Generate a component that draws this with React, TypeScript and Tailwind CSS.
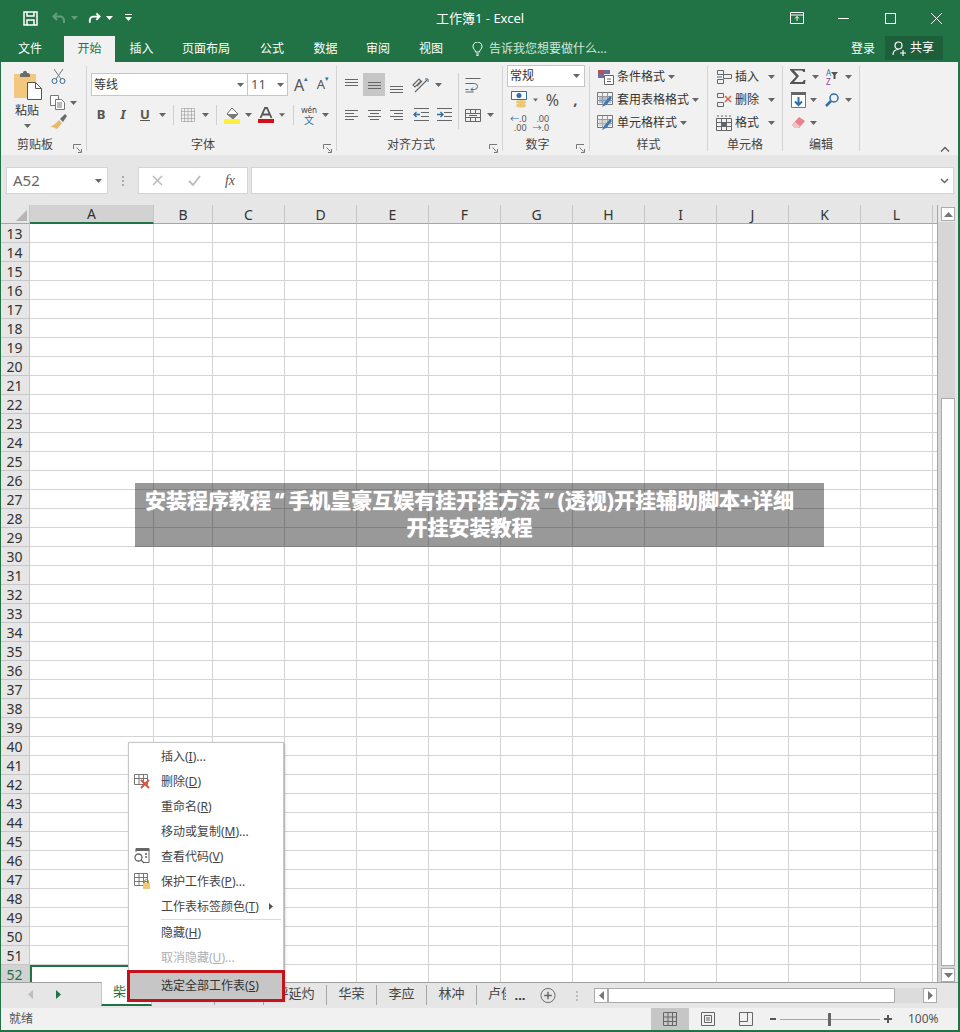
import type { ReactNode } from "react";

const colWidths = [
  "w-[124px]",
  "w-[59px]",
  "w-[72px]",
  "w-[72px]",
  "w-[72px]",
  "w-[72px]",
  "w-[72px]",
  "w-[72px]",
  "w-[72px]",
  "w-[72px]",
  "w-[72px]",
  "w-[72px]",
];
const colNames = ["A", "B", "C", "D", "E", "F", "G", "H", "I", "J", "K", "L"];
const rows = Array.from({ length: 40 }, (_, i) => i + 13);

function Caret({ color = "#666" }: { color?: string }) {
  return (
    <svg width="7" height="4" viewBox="0 0 7 4">
      <path d="M0 0h7L3.5 4z" fill={color} />
    </svg>
  );
}

function Slot({ w, children, className }: { w: string; children?: ReactNode; className?: string }) {
  return <div className={`flex shrink-0 items-center justify-center ${w} ${className ?? ""}`}>{children}</div>;
}

function Launcher() {
  return (
    <svg width="9" height="9" viewBox="0 0 9 9" fill="none" stroke="#777">
      <path d="M.5 5V.5H8M.5 .5" />
      <path d="M3.5 3.5l4 4M8.5 5v3.5H5" />
    </svg>
  );
}

function Group({
  w,
  label,
  launcher,
  children,
}: {
  w: string;
  label: string;
  launcher?: boolean;
  children: ReactNode;
}) {
  return (
    <>
      <div className={`flex h-full shrink-0 flex-col ${w}`}>
        <div className="h-[73px]">{children}</div>
        <div className="flex h-[20px] items-center text-[#444]">
          <div className="flex-1 text-center">{label}</div>
          {launcher && (
            <Slot w="w-[17px]" className="pt-[6px]">
              <Launcher />
            </Slot>
          )}
        </div>
      </div>
      <div className="my-[4px] w-px shrink-0 bg-[#d4d4d4]" />
    </>
  );
}

function Sep({ h = "h-[20px]" }: { h?: string }) {
  return <div className={`w-px bg-[#d0d0d0] ${h}`} />;
}

function AlignLines({ kind, y }: { kind: "l" | "c" | "r" | "j"; y: number }) {
  const rows2 =
    kind === "j"
      ? [
          [1, 14],
          [1, 14],
          [1, 14],
        ]
      : kind === "l"
        ? [
            [1, 14],
            [1, 10],
            [1, 14],
            [1, 10],
          ]
        : kind === "c"
          ? [
              [1, 14],
              [3, 12],
              [1, 14],
              [3, 12],
            ]
          : [
              [1, 14],
              [5, 14],
              [1, 14],
              [5, 14],
            ];
  return (
    <svg width="15" height="16" viewBox="0 0 15 16" stroke="#666">
      {rows2.map((r, i) => (
        <path key={i} d={`M${r[0]} ${y + i * 3 + 0.5}H${r[1]}`} />
      ))}
    </svg>
  );
}

function IndentIcon({ dir }: { dir: "in" | "out" }) {
  return (
    <svg width="17" height="14" viewBox="0 0 17 14" fill="none">
      <path d="M1 .5h15M8 4.500h8M8 8.500h8M1 12.500h15" stroke="#666" />
      {dir === "out" ? (
        <path d="M7 6.500H1M3.500 4L1 6.500 3.500 9" stroke="#2f6ea6" strokeWidth="1.400" />
      ) : (
        <path d="M1 6.500h6M4.500 4L7 6.500 4.500 9" stroke="#2f6ea6" strokeWidth="1.400" />
      )}
    </svg>
  );
}

function TableBrush({ tone }: { tone: string }) {
  return (
    <svg width="17" height="17" viewBox="0 0 17 17" fill="none">
      <path d="M.5 1.500h15v12H.5z" stroke="#777" />
      <path d="M.5 5.500h15M.5 9.500h15M5.500 1.500v12M10.500 1.500v12" stroke="#999" />
      <path d="M2 6h12v6H2z" fill={tone} opacity=".55" />
      <path d="M5 16l2-4 6-7 2 2-6 7z" fill="#3d78b0" />
    </svg>
  );
}

function StyleRow({ icon, label }: { icon: ReactNode; label: string }) {
  return (
    <div className="flex h-[23px] items-center pl-[7px] text-[#333]">
      <Slot w="w-[17px]">{icon}</Slot>
      <span className="ml-[3px]">{label}</span>
      <span className="ml-[3px] flex">
        <Caret />
      </span>
    </div>
  );
}

function CellRow({ icon, label }: { icon: ReactNode; label: string }) {
  return (
    <div className="flex h-[23px] items-center pl-[7px] text-[#333]">
      <Slot w="w-[17px]">{icon}</Slot>
      <span className="ml-[3px] w-[33px]">{label}</span>
      <Slot w="w-[7px]">
        <Caret />
      </Slot>
    </div>
  );
}

function GridIcon({ extra }: { extra?: ReactNode }) {
  return (
    <svg width="16" height="16" viewBox="0 0 16 16" fill="none" stroke="#666">
      <path d="M1.500 1.500h6v4h-6zM1.500 10.500h6v4h-6z" />
      {extra}
    </svg>
  );
}

function TitleBar() {
  return (
    <div className="flex h-[36px] shrink-0 items-center bg-[#217346] text-white">
      <Slot w="w-[52px]" className="pl-[8px]">
        <svg width="15" height="15" viewBox="0 0 15 15" fill="none" stroke="#fff" strokeWidth="1.500">
          <path d="M1 1h13v13H1z" />
          <path d="M4 1v4h7V1M4 14V9h7v5" />
        </svg>
      </Slot>
      <Slot w="w-[14px]" className="opacity-30">
        <svg width="14" height="12" viewBox="0 0 14 12" fill="none" stroke="#fff" strokeWidth="2">
          <path d="M5 1L1.500 4.500 5 8M2 4.500h6a4 4 0 0 1 4 4V11" />
        </svg>
      </Slot>
      <Slot w="w-[16px]" className="opacity-30">
        <Caret color="#fff" />
      </Slot>
      <Slot w="w-[14px]" className="ml-[5px]">
        <svg width="15" height="12" viewBox="0 0 15 12" fill="none" stroke="#fff" strokeWidth="2">
          <path d="M10 1l3.500 3.500L10 8M13 4.500H7a4 4 0 0 0-4 4V11" />
        </svg>
      </Slot>
      <Slot w="w-[16px]">
        <Caret color="#fff" />
      </Slot>
      <Slot w="w-[22px]">
        <svg width="7" height="8" viewBox="0 0 7 8">
          <path d="M0 0h7v1H0zM0 3h7L3.500 7z" fill="#fff" />
        </svg>
      </Slot>
      <div className="ml-[297px] w-[100px] whitespace-nowrap pt-[2px] text-[13px]">工作簿1 - Excel</div>
      <Slot w="w-[16px]" className="ml-[253px]">
        <svg width="14" height="12" viewBox="0 0 14 12" fill="none" stroke="#fff">
          <path d="M.5 .5h13v11H.5zM.5 3h13" />
          <path d="M7 9V4.500M5 6.500l2-2 2 2" />
        </svg>
      </Slot>
      <Slot w="w-[12px]" className="ml-[32px]">
        <div className="h-px w-[11px] bg-white" />
      </Slot>
      <Slot w="w-[12px]" className="ml-[35px]">
        <div className="h-[11px] w-[11px] border border-white" />
      </Slot>
      <Slot w="w-[13px]" className="ml-[34px]">
        <svg width="13" height="13" viewBox="0 0 13 13" stroke="#fff">
          <path d="M1 1l11 11M12 1L1 12" />
        </svg>
      </Slot>
    </div>
  );
}

function TabRow() {
  const tabs: [string, string][] = [
    ["插入", "w-[53px]"],
    ["页面布局", "w-[76px]"],
    ["公式", "w-[56px]"],
    ["数据", "w-[51px]"],
    ["审阅", "w-[54px]"],
    ["视图", "w-[52px]"],
  ];
  return (
    <div className="flex h-[26px] shrink-0 items-center bg-[#217346] text-white">
      <Slot w="w-[64px]" className="h-full pr-[4px]">
        文件
      </Slot>
      <Slot w="w-[51px]" className="h-full bg-[#f1f1f1] text-[#217346]">
        开始
      </Slot>
      {tabs.map(([t, w]) => (
        <Slot key={t} w={w} className="h-full">
          {t}
        </Slot>
      ))}
      <Slot w="w-[13px]" className="ml-[14px]">
        <svg width="11" height="14" viewBox="0 0 11 14" fill="none" stroke="#fff">
          <path d="M3.500 10c0-2-2.500-3-2.500-5.500a4.500 4.500 0 0 1 9 0C10 7 7.500 8 7.500 10zM4 12h3M4.500 13.500h2" />
        </svg>
      </Slot>
      <div className="ml-[5px] w-[362px] whitespace-nowrap text-[#d5e6dc]">告诉我您想要做什么...</div>
      <div className="w-[25px] whitespace-nowrap">登录</div>
      <div className="ml-[9px] flex h-[24px] w-[58px] items-center self-start bg-[#1c5f3a] pl-[7px]">
        <svg width="15" height="15" viewBox="0 0 15 15" fill="none" stroke="#fff" strokeWidth="1.200">
          <circle cx="6.500" cy="4.500" r="3.500" />
          <path d="M1 14c0-4 2-5.500 5.500-5.500M8 12h6M11 9v6" />
        </svg>
        <span className="ml-[3px]">共享</span>
      </div>
    </div>
  );
}

function Ribbon() {
  return (
    <div className="flex h-[93px] shrink-0 bg-[#f1f1f1] pl-[1px]">
      <Group w="w-[85px]" label="剪贴板" launcher>
        <div className="flex">
          <div className="flex w-[49px] flex-col items-center pl-[3px] pt-[8px]">
            <svg width="29" height="30" viewBox="0 0 29 30">
              <path d="M1 4h22v24H1z" fill="#f3c77d" />
              <path d="M7 5c0-2 2-2 3-2 0-3 4-3 4 0 1 0 3 0 3 2v2H7z" fill="#6b6b6b" />
              <path d="M14.500 12.500h8l6 6v11h-14z" fill="#fff" stroke="#555" />
              <path d="M22.500 12.500v6h6" fill="none" stroke="#555" />
            </svg>
            <div className="mt-[2px] text-[#333]">粘贴</div>
            <div className="mt-[4px] flex">
              <Caret />
            </div>
          </div>
          <div className="flex flex-col pt-[6px]">
            <div className="h-[24px] pl-[1px]">
              <svg width="15" height="16" viewBox="0 0 15 16" fill="none" stroke="#35688f">
                <path d="M3 1l7 10M12 1L5 11" stroke="#777" />
                <circle cx="3.500" cy="13" r="2.500" />
                <circle cx="11.500" cy="13" r="2.500" />
              </svg>
            </div>
            <div className="flex h-[21px] items-center">
              <svg width="15" height="15" viewBox="0 0 15 15" fill="#fff" stroke="#777">
                <path d="M.5 .5h8v10h-8z" />
                <path d="M5.500 4.500h6l3 3v7h-9z" />
                <path d="M7 8h5M7 10h5M7 12h5" />
              </svg>
              <span className="ml-[5px] flex">
                <Caret />
              </span>
            </div>
            <div className="mt-[1px] h-[20px]">
              <svg width="17" height="16" viewBox="0 0 17 16">
                <path d="M9 6l3 3-5 6-7-3c3 0 5-2 9-6z" fill="#e8b96a" />
                <path d="M10 5l5-5 2 2-4 6z" fill="#6b6b6b" />
              </svg>
            </div>
          </div>
        </div>
      </Group>

      <Group w="w-[249px]" label="字体" launcher>
        <div className="flex h-[34px] items-end pl-[4px]">
          <div className="flex h-[23px] w-[157px] items-center border border-[#c6c6c6] bg-white pl-[2px] text-[#333]">
            <span className="flex-1">等线</span>
            <span className="mr-[3px] flex">
              <Caret />
            </span>
          </div>
          <div className="flex h-[23px] w-[40px] items-center border border-l-0 border-[#c6c6c6] bg-white pl-[3px] text-[13px] text-[#555]">
            <span className="flex-1">11</span>
            <span className="mr-[3px] flex">
              <Caret />
            </span>
          </div>
          <Slot w="w-[22px]" className="ml-[2px] h-[23px] text-[16px] text-[#555]">
            A<span className="-mt-[10px] text-[7px] text-[#2f6ea6]">▴</span>
          </Slot>
          <Slot w="w-[22px]" className="h-[23px] text-[13px] text-[#555]">
            A<span className="-mt-[10px] text-[7px] text-[#2f6ea6]">▾</span>
          </Slot>
        </div>
        <div className="mt-[8px] flex h-[22px] items-center pl-[4px] text-[#555]">
          <Slot w="w-[20px]" className="text-[13px] font-bold">
            B
          </Slot>
          <Slot w="w-[24px]" className="text-[13px] font-bold italic">
            I
          </Slot>
          <Slot w="w-[20px]" className="text-[13px] font-bold underline">
            U
          </Slot>
          <Slot w="w-[14px]">
            <Caret />
          </Slot>
          <Slot w="w-[8px]">
            <Sep />
          </Slot>
          <Slot w="w-[22px]">
            <svg width="14" height="14" viewBox="0 0 14 14" fill="none" stroke="#888" strokeDasharray="1 1">
              <path d="M.5 .5h13v13H.5zM7 .5v13M.5 7h13M3.500 .5v13M10.500 .5v13M.5 3.500h13M.5 10.500h13" />
            </svg>
          </Slot>
          <Slot w="w-[12px]">
            <Caret />
          </Slot>
          <Slot w="w-[10px]">
            <Sep />
          </Slot>
          <Slot w="w-[22px]">
            <svg width="16" height="17" viewBox="0 0 16 17">
              <path d="M8 1l6 6-5 5-6-5z" fill="#fff" stroke="#666" />
              <path d="M3 7h11l-5 5z" fill="#7a7a7a" />
              <path d="M0 12h16v5H0z" fill="#ffef3a" />
            </svg>
          </Slot>
          <Slot w="w-[10px]">
            <Caret />
          </Slot>
          <Slot w="w-[26px]">
            <svg width="16" height="16" viewBox="0 0 16 16">
              <path d="M0 12h16v4H0z" fill="#d2101a" />
              <path d="M2.500 11L7 1h2l4.500 10M4.500 7.500h7" fill="none" stroke="#555" strokeWidth="1.800" />
            </svg>
          </Slot>
          <Slot w="w-[6px]">
            <Caret />
          </Slot>
          <Slot w="w-[16px]">
            <Sep />
          </Slot>
          <Slot w="w-[16px]" className="h-[22px]">
            <div className="flex flex-col items-center leading-[10px]">
              <span className="text-[8px] text-[#444]">wén</span>
              <span className="text-[10px] text-[#2f6ea6]">文</span>
            </div>
          </Slot>
          <Slot w="w-[16px]">
            <Caret />
          </Slot>
        </div>
      </Group>

      <Group w="w-[165px]" label="对齐方式" launcher>
        <div className="flex pl-[3px] pt-[11px]">
          <div className="w-[118px]">
            <div className="flex h-[23px] items-center">
              <Slot w="w-[23px]">
                <AlignLines kind="j" y={2} />
              </Slot>
              <Slot w="w-[22px]" className="h-full bg-[#c6c6c6]">
                <AlignLines kind="j" y={5} />
              </Slot>
              <Slot w="w-[23px]">
                <AlignLines kind="j" y={9} />
              </Slot>
              <Slot w="w-[24px]">
                <svg width="17" height="16" viewBox="0 0 17 16" fill="none" stroke="#666">
                  <path d="M1 8l6-6 2 2-6 6zM5 9l5-5M3 15L15 3" strokeWidth="1.100" />
                  <path d="M13 2h3v3" stroke="#2f6ea6" />
                </svg>
              </Slot>
              <Slot w="w-[12px]">
                <Caret />
              </Slot>
            </div>
            <div className="mt-[8px] flex h-[22px] items-center">
              <Slot w="w-[23px]">
                <AlignLines kind="l" y={3} />
              </Slot>
              <Slot w="w-[22px]">
                <AlignLines kind="c" y={3} />
              </Slot>
              <Slot w="w-[23px]">
                <AlignLines kind="r" y={3} />
              </Slot>
              <Slot w="w-[24px]" className="ml-[1px]">
                <IndentIcon dir="out" />
              </Slot>
              <Slot w="w-[22px]">
                <IndentIcon dir="in" />
              </Slot>
            </div>
          </div>
          <div className="h-[56px] w-px bg-[#d0d0d0]" />
          <div className="flex flex-col">
            <Slot w="w-[28px]" className="h-[23px]">
              <svg width="16" height="16" viewBox="0 0 16 16" fill="none" stroke="#666">
                <path d="M.5 1.500h15M.5 6.500h9a3 3 0 0 1 0 6H6M.5 12.500h3M.5 15h8" />
                <path d="M8 10.500l-2 2 2 2" stroke="#2f6ea6" />
              </svg>
            </Slot>
            <div className="mt-[8px] flex h-[22px] items-center">
              <Slot w="w-[28px]">
                <svg width="16" height="13" viewBox="0 0 16 13" fill="none" stroke="#666">
                  <path d="M.5 .5h15v12H.5zM.5 4.500h15M.5 8.500h15M5.500 .5v4M10.500 .5v4M5.500 8.500v4M10.500 8.500v4" />
                  <path d="M4 6.500h8" stroke="#2f6ea6" />
                </svg>
              </Slot>
              <Caret />
            </div>
          </div>
        </div>
      </Group>

      <Group w="w-[86px]" label="数字" launcher>
        <div className="pl-[4px] pr-[3px] pt-[3px]">
          <div className="flex h-[22px] w-[78px] items-center border border-[#c6c6c6] bg-white pl-[2px] text-[#333]">
            <span className="flex-1">常规</span>
            <span className="mr-[4px] flex">
              <Caret />
            </span>
          </div>
          <div className="flex h-[25px] items-center text-[#555]">
            <Slot w="w-[24px]">
              <svg width="17" height="17" viewBox="0 0 17 17">
                <path d="M.5 .5h15v8H.5z" fill="#fff" stroke="#2f6ea6" />
                <circle cx="8" cy="4.500" r="2.500" fill="#2f6ea6" />
                <ellipse cx="10" cy="11" rx="5" ry="2" fill="#ecc876" />
                <ellipse cx="10" cy="14.500" rx="5" ry="2" fill="#ecc876" />
              </svg>
            </Slot>
            <Slot w="w-[5px]" className="ml-[2px]">
              <Caret />
            </Slot>
            <Slot w="w-[25px]" className="ml-[2px] text-[16px]">
              %
            </Slot>
            <Slot w="w-[15px]" className="ml-[3px] text-[15px] font-bold">
              ,
            </Slot>
          </div>
          <div className="flex h-[22px] items-center gap-[6px] pl-[3px] text-[9px] leading-[9px] text-[#555]">
            <div className="text-right">
              <span className="text-[#2f6ea6]">←</span>.0
              <br />
              .00
            </div>
            <div className="text-right">
              .00
              <br />
              <span className="text-[#2f6ea6]">→</span>.0
            </div>
          </div>
        </div>
      </Group>

      <Group w="w-[117px]" label="样式">
        <div className="pt-[3px]">
          <StyleRow
            label="条件格式"
            icon={
              <svg width="16" height="16" viewBox="0 0 16 16">
                <path d="M0 1h6v4H0z" fill="#b5544e" />
                <path d="M6 1h6v4H6z" fill="#6e6e9f" />
                <path d="M0 5h6v4H0z" fill="#6e6e9f" />
                <path d="M6.500 6.500h9v9h-9z" fill="#fff" stroke="#666" />
                <path d="M9 10h4M9 12.500h4" stroke="#666" />
              </svg>
            }
          />
          <StyleRow label="套用表格格式" icon={<TableBrush tone="#7a90b8" />} />
          <StyleRow label="单元格样式" icon={<TableBrush tone="#bdbdbd" />} />
        </div>
      </Group>

      <Group w="w-[74px]" label="单元格">
        <div className="pt-[3px]">
          <CellRow
            label="插入"
            icon={
              <GridIcon
                extra={
                  <>
                    <path d="M7.500 5.500h8v4h-8z" />
                    <path d="M1 8h5" stroke="#2f6ea6" />
                  </>
                }
              />
            }
          />
          <CellRow label="删除" icon={<GridIcon extra={<path d="M9 4l6 6M15 4l-6 6" stroke="#d9634c" strokeWidth="1.500" />} />} />
          <CellRow
            label="格式"
            icon={
              <svg width="16" height="16" viewBox="0 0 16 16" fill="none" stroke="#666">
                <path d="M.5 3.500h15v12H.5zM.5 7.500h15M.5 11.500h15M5.500 3.500v12M10.500 3.500v12" />
                <path d="M6 8h4v3H6z" fill="#2f6ea6" />
                <path d="M1 1h14" strokeDasharray="2 2" />
              </svg>
            }
          />
        </div>
      </Group>

      <Group w="w-[76px]" label="编辑">
        <div className="pl-[7px] pt-[3px] text-[#555]">
          <div className="flex h-[23px] items-center">
            <Slot w="w-[16px]">
              <svg width="16" height="15" viewBox="0 0 16 15" fill="#555">
                <path d="M0 0h15v3h-1.500L12 1.500H4L9 7l-5 6h8.500L14 11h1.500l-.5 4H0v-1l6-6.500L0 1z" />
              </svg>
            </Slot>
            <Slot w="w-[18px]">
              <Caret />
            </Slot>
            <Slot w="w-[14px]" className="ml-[1px]">
              <div className="flex flex-col text-[8px] leading-[9px]">
                <span className="text-[#2f6ea6]">A</span>
                <span className="text-[#8a3e93]">Z</span>
              </div>
              <svg width="7" height="7" viewBox="0 0 7 7" className="mb-[2px]">
                <path d="M0 0h7L4.500 3v4h-2V3z" fill="#555" />
              </svg>
            </Slot>
            <Slot w="w-[8px]" className="ml-[5px]">
              <Caret />
            </Slot>
          </div>
          <div className="flex h-[23px] items-center">
            <Slot w="w-[16px]">
              <svg width="15" height="16" viewBox="0 0 15 16" fill="none">
                <path d="M.5 .5h14v15H.5z" fill="#fff" stroke="#777" />
                <path d="M0 0h15v3H0z" fill="#666" />
                <path d="M7.500 5v8M4 9.500l3.500 3.500L11 9.500" stroke="#2f6ea6" strokeWidth="2" />
              </svg>
            </Slot>
            <Slot w="w-[14px]">
              <Caret />
            </Slot>
            <Slot w="w-[16px]" className="ml-[4px]">
              <svg width="14" height="14" viewBox="0 0 14 14" fill="none" stroke="#2f6ea6">
                <circle cx="9" cy="5" r="4" strokeWidth="1.500" />
                <path d="M6 8l-5 5" strokeWidth="2.500" />
              </svg>
            </Slot>
            <Slot w="w-[8px]" className="ml-[4px]">
              <Caret />
            </Slot>
          </div>
          <div className="flex h-[23px] items-center">
            <Slot w="w-[16px]">
              <svg width="15" height="13" viewBox="0 0 15 13">
                <path d="M1 9l7-8 6 4-6 7H4z" fill="#e8838a" />
                <path d="M1 9l3-3 5 4-2 2H4z" fill="#f3c4c6" />
              </svg>
            </Slot>
            <Slot w="w-[14px]">
              <Caret />
            </Slot>
          </div>
        </div>
      </Group>

      <div className="flex flex-1 items-end justify-end pb-[3px] pr-[10px]">
        <svg width="10" height="6" viewBox="0 0 10 6" fill="none" stroke="#666" strokeWidth="1.500">
          <path d="M1 5.500l4-4 4 4" />
        </svg>
      </div>
    </div>
  );
}

function FormulaBar() {
  return (
    <div className="shrink-0 bg-[#e6e6e6] pt-[12px] pb-[11px]">
      <div className="flex h-[27px] items-stretch pl-[6px] pr-[6px]">
        <div className="flex w-[102px] items-center border border-[#d4d4d4] bg-white pl-[6px] text-[15px] text-[#666]">
          <span className="flex-1">A52</span>
          <span className="mr-[5px] flex">
            <Caret />
          </span>
        </div>
        <Slot w="w-[30px]">
          <div className="flex flex-col gap-[2px]">
            <div className="h-[2px] w-[2px] bg-[#aaa]" />
            <div className="h-[2px] w-[2px] bg-[#aaa]" />
            <div className="h-[2px] w-[2px] bg-[#aaa]" />
          </div>
        </Slot>
        <div className="flex w-[110px] items-center border border-[#d4d4d4] bg-white">
          <Slot w="w-[37px]">
            <svg width="11" height="11" viewBox="0 0 11 11" stroke="#bbb" strokeWidth="1.500">
              <path d="M1 1l9 9M10 1l-9 9" />
            </svg>
          </Slot>
          <Slot w="w-[36px]">
            <svg width="13" height="11" viewBox="0 0 13 11" fill="none" stroke="#bbb" strokeWidth="1.800">
              <path d="M1 6l4 4 7-9" />
            </svg>
          </Slot>
          <Slot w="w-[36px]" className="font-['Liberation_Serif',serif] text-[14px] italic text-[#555]">
            fx
          </Slot>
        </div>
        <div className="ml-[3px] flex flex-1 items-center justify-end border border-[#d4d4d4] bg-white pr-[4px]">
          <svg width="9" height="6" viewBox="0 0 9 6" fill="none" stroke="#666" strokeWidth="1.500">
            <path d="M1 1l3.500 3.500L8 1" />
          </svg>
        </div>
      </div>
    </div>
  );
}

function ColumnHeader() {
  return (
    <div className="flex h-[19px] shrink-0 bg-[#e6e6e6] text-[14px] text-[#333]">
      <div className="flex w-[30px] shrink-0 items-end justify-end border-b border-r border-b-[#a6a6a6] border-r-[#c6c6c6] pb-[2px] pr-[2px]">
        <svg width="11" height="11" viewBox="0 0 11 11">
          <path d="M11 0v11H0z" fill="#b5b5b5" />
        </svg>
      </div>
      {colNames.map((c, i) => (
        <div
          key={c}
          className={`flex shrink-0 items-center justify-center border-r border-r-[#c6c6c6] ${colWidths[i]} ${
            i === 0 ? "border-b-2 border-b-[#217346] bg-[#d2d2d2]" : "border-b border-b-[#a6a6a6]"
          }`}
        >
          {c}
        </div>
      ))}
      <div className="flex-1 border-b border-r border-[#a6a6a6]" />
    </div>
  );
}

function Sheet() {
  return (
    <div className="min-h-0 flex-1 overflow-hidden border-r border-[#a6a6a6] bg-white">
      {rows.map((r) => (
        <div key={r} className="flex h-[19px]">
          <div
            className={`flex w-[30px] shrink-0 items-center justify-center border-b border-r border-[#c6c6c6] text-[14px] ${
              r === 52 ? "bg-[#d2d2d2] text-[#217346]" : "bg-[#e6e6e6] text-[#333]"
            }`}
          >
            {r}
          </div>
          {colWidths.map((w, i) => (
            <div
              key={i}
              className={`shrink-0 ${w} ${
                r === 52 && i === 0 ? "border-2 border-[#217346]" : "border-b border-r border-[#d4d4d4]"
              }`}
            />
          ))}
          <div className="flex-1 border-b border-[#d4d4d4]" />
        </div>
      ))}
    </div>
  );
}

function VScroll() {
  return (
    <div className="flex w-[20px] shrink-0 flex-col bg-[#e6e6e6]">
      <div className="h-[17px] pl-[3px] pt-[2px]">
        <div className="flex h-[14px] w-[14px] items-center justify-center border border-[#ababab] bg-white">
          <svg width="9" height="5" viewBox="0 0 9 5">
            <path d="M4.500 0L9 5H0z" fill="#777" />
          </svg>
        </div>
      </div>
      <div className="flex min-h-0 w-[17px] flex-1 flex-col bg-[#d6d6d6] pl-[3px]">
        <div className="h-[176px]" />
        <div className="flex-1 border border-[#ababab] bg-white" />
        <div className="mt-[2px] flex h-[14px] items-center justify-center border border-[#ababab] bg-white">
          <svg width="9" height="5" viewBox="0 0 9 5">
            <path d="M0 0h9L4.500 5z" fill="#777" />
          </svg>
        </div>
      </div>
    </div>
  );
}

function Menu() {
  const item = "flex h-[25px] items-center pl-[32px] text-[#444]";
  return (
    <div className="absolute left-[128px] top-[742px] z-10 h-[258px] w-[156px] border border-[#c6c6c6] bg-white pt-[1px] shadow-[1px_1px_3px_rgba(0,0,0,.2)]">
      <div className={item}>
        插入(<u>I</u>)...
      </div>
      <div className={`${item} relative`}>
        <span className="absolute left-[5px] top-[4px] flex">
          <svg width="17" height="17" viewBox="0 0 17 17" fill="none">
            <path d="M.5 1.500h13v10H.5zM.5 5.500h13M5 1.500v10M9.500 1.500v10" stroke="#777" />
            <path d="M7 7l8 8M15 7l-8 8" stroke="#d9533d" strokeWidth="2" />
          </svg>
        </span>
        删除(<u>D</u>)
      </div>
      <div className={item}>
        重命名(<u>R</u>)
      </div>
      <div className={item}>
        移动或复制(<u>M</u>)...
      </div>
      <div className={`${item} relative`}>
        <span className="absolute left-[5px] top-[4px] flex">
          <svg width="16" height="16" viewBox="0 0 16 16" fill="none" stroke="#666">
            <path d="M2 4V1.500h13v13H9" />
            <path d="M2 .5h13v2H2z" fill="#666" />
            <circle cx="4.500" cy="9.500" r="3.500" strokeWidth="1.300" />
            <path d="M7 12l3 3M11 6h2M11 9h2" strokeWidth="1.300" />
          </svg>
        </span>
        查看代码(<u>V</u>)
      </div>
      <div className={`${item} relative`}>
        <span className="absolute left-[5px] top-[3px] flex">
          <svg width="17" height="18" viewBox="0 0 17 18" fill="none">
            <path d="M.5 1.500h13v12H.5zM.5 5.500h13M.5 9.500h13M5 1.500v12M9.500 1.500v12" stroke="#777" />
            <path d="M9 11h7v6H9z" fill="#edc876" />
            <path d="M10.500 11V9.500a2 2 0 0 1 4 0V11" stroke="#a8883f" />
          </svg>
        </span>
        保护工作表(<u>P</u>)...
      </div>
      <div className={`${item} justify-between pr-[10px]`}>
        <span>
          工作表标签颜色(<u>T</u>)
        </span>
        <svg width="4" height="7" viewBox="0 0 4 7">
          <path d="M0 0l4 3.500L0 7z" fill="#555" />
        </svg>
      </div>
      <div className="ml-[32px] mr-[2px] h-px bg-[#d9d9d9]" />
      <div className={item}>
        隐藏(<u>H</u>)
      </div>
      <div className={`${item} text-[#b0b0b0]`}>
        取消隐藏(<u>U</u>)...
      </div>
      <div className="-mx-[2px] flex h-[32px] items-center border-[3px] border-[#c4141b] bg-[#c6c6c6] pl-[31px] text-[#333]">
        <span>
          选定全部工作表(<u>S</u>)
        </span>
      </div>
    </div>
  );
}

function SheetTabs() {
  const others: [string, string][] = [
    ["呼延灼", "w-[63px]"],
    ["华荣", "w-[50px]"],
    ["李应", "w-[50px]"],
    ["林冲", "w-[50px]"],
  ];
  return (
    <div className="flex h-[26px] shrink-0 border-t border-[#a0a0a0] bg-[#e6e6e6] text-[13px] text-[#444]">
      <Slot w="w-[44px]" className="pb-[2px] pl-[16px]">
        <svg width="5" height="9" viewBox="0 0 5 9">
          <path d="M5 0v9L0 4.500z" fill="#bdbdbd" />
        </svg>
      </Slot>
      <Slot w="w-[28px]" className="pb-[2px]">
        <svg width="5" height="9" viewBox="0 0 5 9">
          <path d="M0 0v9l5-4.500z" fill="#217346" />
        </svg>
      </Slot>
      <div className="w-[29px]" />
      <div className="-mt-px flex h-[24px] w-[51px] items-center border-x border-b-2 border-x-[#c6c6c6] border-b-[#217346] bg-white pb-[2px] pl-[11px] text-[#217346]">
        柴
      </div>
      <div className="mb-[3px] mt-[2px] w-[63px] shrink-0 border-r border-[#a6a6a6]" />
      <div className="mb-[3px] mt-[2px] w-[49px] shrink-0 border-r border-[#a6a6a6]" />
      {others.map(([t, w]) => (
        <Slot key={t} w={w} className="mb-[3px] mt-[2px] border-r border-[#a6a6a6] pb-[2px]">
          {t}
        </Slot>
      ))}
      <div className="ml-[11px] mt-[1px] w-[18px] overflow-hidden whitespace-nowrap">卢俊义</div>
      <Slot w="w-[26px]" className="ml-[1px] font-bold text-[#333]">
        ...
      </Slot>
      <Slot w="w-[16px]" className="ml-[7px]">
        <svg width="17" height="17" viewBox="0 0 17 17" fill="none" stroke="#666">
          <circle cx="8.500" cy="8.500" r="7.500" />
          <path d="M8.500 4.500v8M4.500 8.500h8" strokeWidth="1.500" />
        </svg>
      </Slot>
      <Slot w="w-[38px]" className="pl-[4px]">
        <div className="flex flex-col gap-[2px]">
          <div className="h-[2px] w-[2px] bg-[#bbb]" />
          <div className="h-[2px] w-[2px] bg-[#bbb]" />
          <div className="h-[2px] w-[2px] bg-[#bbb]" />
        </div>
      </Slot>
      <div className="mt-[5px] flex h-[15px] w-[343px] shrink-0 bg-[#dcdcdc]">
        <div className="flex w-[14px] items-center justify-center border border-[#ababab] bg-white">
          <svg width="5" height="9" viewBox="0 0 5 9">
            <path d="M5 0v9L0 4.500z" fill="#777" />
          </svg>
        </div>
        <div className="w-[287px] border border-[#ababab] bg-white" />
        <div className="flex-1" />
        <div className="flex w-[14px] items-center justify-center border border-[#ababab] bg-white">
          <svg width="5" height="9" viewBox="0 0 5 9">
            <path d="M0 0v9l5-4.500z" fill="#777" />
          </svg>
        </div>
      </div>
    </div>
  );
}

function StatusBar() {
  return (
    <div className="flex h-[24px] shrink-0 items-stretch border-b-2 border-[#217346] bg-[#f1f1f1] text-[#555]">
      <div className="flex w-[651px] items-center pl-[9px]">就绪</div>
      <Slot w="w-[38px]" className="bg-[#c6c6c6]">
        <svg width="14" height="14" viewBox="0 0 14 14" fill="none" stroke="#666">
          <path d="M.5 .5h13v13H.5zM5 .5v13M9.500 .5v13M.5 5h13M.5 9.500h13" />
        </svg>
      </Slot>
      <Slot w="w-[38px]">
        <svg width="14" height="14" viewBox="0 0 14 14" fill="none" stroke="#666">
          <path d="M.5 .5h13v13H.5zM3.500 3.500h7v7h-7zM5 6h4M5 8h4" />
        </svg>
      </Slot>
      <Slot w="w-[38px]">
        <svg width="14" height="14" viewBox="0 0 14 14" fill="none" stroke="#666">
          <path d="M.5 .5h13v13H.5zM.5 9.500h8V.5" />
        </svg>
      </Slot>
      <Slot w="w-[14px]" className="ml-[1px]">
        <div className="h-[2px] w-[6px] bg-[#555]" />
      </Slot>
      <div className="flex w-[100px] items-center">
        <div className="h-px flex-1 bg-[#a6a6a6]" />
        <div className="h-[13px] w-[3px] bg-[#666]" />
        <div className="h-px w-[49px] bg-[#a6a6a6]" />
      </div>
      <Slot w="w-[16px]">
        <svg width="8" height="8" viewBox="0 0 8 8" stroke="#555" strokeWidth="2">
          <path d="M0 4h8M4 0v8" />
        </svg>
      </Slot>
      <div className="ml-[12px] flex items-center text-[12px]">100%</div>
    </div>
  );
}

export default function App() {
  return (
    <div className="relative flex h-[1032px] w-[960px] flex-col overflow-hidden font-['Noto_Sans','Noto_Sans_CJK_SC',sans-serif] text-[12px]">
      <TitleBar />
      <TabRow />
      <Ribbon />
      <FormulaBar />
      <div className="flex min-h-0 flex-1 bg-[#e6e6e6]">
        <div className="flex min-w-0 flex-1 flex-col">
          <ColumnHeader />
          <Sheet />
        </div>
        <VScroll />
        <div className="w-[2px] shrink-0" />
      </div>
      <SheetTabs />
      <StatusBar />

      <div className="absolute inset-y-0 left-0 z-30 w-px bg-[#217346]" />
      <div className="absolute inset-y-0 right-0 z-30 w-[2px] bg-[#217346]" />

      <Menu />

      <div className="absolute left-[135px] top-[483px] z-20 flex h-[64px] w-[689px] items-center justify-center bg-black/40 pb-[2px] pr-[20px] text-center text-[21px] font-bold leading-[27px] text-white [text-shadow:0_0_1px_#fff]">
        <div>
          安装程序教程<span className="mx-[4px]">“</span>手机皇豪互娱有挂开挂方法<span className="mx-[4px]">”</span>(透视)开挂辅助脚本+详细
          <br />
          开挂安装教程
        </div>
      </div>
    </div>
  );
}
